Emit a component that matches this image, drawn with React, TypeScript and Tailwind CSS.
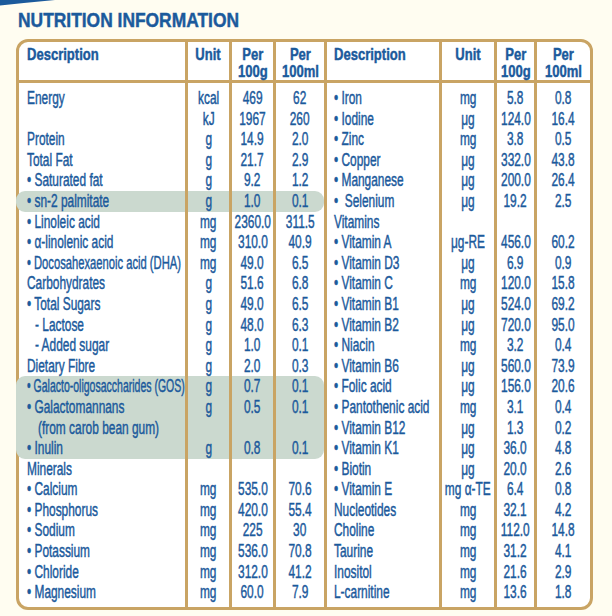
type Line = { d: string; u?: string; a?: string; b?: string; ind?: number; t?: number };

const LEFT_TOP: Line[] = [
  { d: 'Energy', u: 'kcal', a: '469', b: '62' },
  { d: '', u: 'kJ', a: '1967', b: '260' },
  { d: 'Protein', u: 'g', a: '14.9', b: '2.0' },
  { d: 'Total Fat', u: 'g', a: '21.7', b: '2.9' },
  { d: '• Saturated fat', u: 'g', a: '9.2', b: '1.2' },
];
const LEFT_SN2: Line[] = [{ d: '• sn-2 palmitate', u: 'g', a: '1.0', b: '0.1' }];
const LEFT_MID: Line[] = [
  { d: '• Linoleic acid', u: 'mg', a: '2360.0', b: '311.5' },
  { d: '• α-linolenic acid', u: 'mg', a: '310.0', b: '40.9' },
  { d: '• Docosahexaenoic acid (DHA)', u: 'mg', a: '49.0', b: '6.5', t: 1 },
  { d: 'Carbohydrates', u: 'g', a: '51.6', b: '6.8' },
  { d: '• Total Sugars', u: 'g', a: '49.0', b: '6.5' },
  { d: '- Lactose', u: 'g', a: '48.0', b: '6.3', ind: 1 },
  { d: '- Added sugar', u: 'g', a: '1.0', b: '0.1', ind: 1 },
  { d: 'Dietary Fibre', u: 'g', a: '2.0', b: '0.3' },
];
const LEFT_FIBRE: Line[] = [
  { d: '• Galacto-oligosaccharides (GOS)', u: 'g', a: '0.7', b: '0.1', t: 2 },
  { d: '• Galactomannans', u: 'g', a: '0.5', b: '0.1' },
  { d: '(from carob bean gum)', ind: 2 },
  { d: '• Inulin', u: 'g', a: '0.8', b: '0.1' },
];
const LEFT_END: Line[] = [
  { d: 'Minerals' },
  { d: '• Calcium', u: 'mg', a: '535.0', b: '70.6' },
  { d: '• Phosphorus', u: 'mg', a: '420.0', b: '55.4' },
  { d: '• Sodium', u: 'mg', a: '225', b: '30' },
  { d: '• Potassium', u: 'mg', a: '536.0', b: '70.8' },
  { d: '• Chloride', u: 'mg', a: '312.0', b: '41.2' },
  { d: '• Magnesium', u: 'mg', a: '60.0', b: '7.9' },
];

const RIGHT: Line[] = [
  { d: '• Iron', u: 'mg', a: '5.8', b: '0.8' },
  { d: '• Iodine', u: 'μg', a: '124.0', b: '16.4' },
  { d: '• Zinc', u: 'mg', a: '3.8', b: '0.5' },
  { d: '• Copper', u: 'μg', a: '332.0', b: '43.8' },
  { d: '• Manganese', u: 'μg', a: '200.0', b: '26.4' },
  { d: '•\u00a0 Selenium', u: 'μg', a: '19.2', b: '2.5' },
  { d: 'Vitamins' },
  { d: '• Vitamin A', u: 'μg-RE', a: '456.0', b: '60.2' },
  { d: '• Vitamin D3', u: 'μg', a: '6.9', b: '0.9' },
  { d: '• Vitamin C', u: 'mg', a: '120.0', b: '15.8' },
  { d: '• Vitamin B1', u: 'μg', a: '524.0', b: '69.2' },
  { d: '• Vitamin B2', u: 'μg', a: '720.0', b: '95.0' },
  { d: '• Niacin', u: 'mg', a: '3.2', b: '0.4' },
  { d: '• Vitamin B6', u: 'μg', a: '560.0', b: '73.9' },
  { d: '• Folic acid', u: 'μg', a: '156.0', b: '20.6' },
  { d: '• Pantothenic acid', u: 'mg', a: '3.1', b: '0.4' },
  { d: '• Vitamin B12', u: 'μg', a: '1.3', b: '0.2' },
  { d: '• Vitamin K1', u: 'μg', a: '36.0', b: '4.8' },
  { d: '• Biotin', u: 'μg', a: '20.0', b: '2.6' },
  { d: '• Vitamin E', u: 'mg α-TE', a: '6.4', b: '0.8' },
  { d: 'Nucleotides', u: 'mg', a: '32.1', b: '4.2' },
  { d: 'Choline', u: 'mg', a: '112.0', b: '14.8' },
  { d: 'Taurine', u: 'mg', a: '31.2', b: '4.1' },
  { d: 'Inositol', u: 'mg', a: '21.6', b: '2.9' },
  { d: 'L-carnitine', u: 'mg', a: '13.6', b: '1.8' },
];

const LINE = 'border-l-[3px] border-[#c9a464]';

// narrow text: the print uses a condensed face, so squeeze Arial-width glyphs
function Txt({ children, t }: { children?: React.ReactNode; t?: number }) {
  const sc = t === 2 ? 'scale-x-[0.6]' : t === 1 ? 'scale-x-[0.64]' : 'scale-x-[0.68]';
  return <span className={`inline-block origin-left whitespace-nowrap ${sc}`}>{children}</span>;
}

function Num({ children }: { children?: React.ReactNode }) {
  return <span className="inline-block whitespace-nowrap scale-x-[0.68]">{children}</span>;
}

function LeftRow({ d, u, a, b, ind, t }: Line) {
  const pad = ind === 2 ? 'pl-[19px]' : ind === 1 ? 'pl-[16px]' : 'pl-[8px]';
  return (
    <div className="flex h-[20.6px] leading-[20.6px]">
      <div className={`w-[166px] ${pad}`}><Txt t={t}>{d}</Txt></div>
      <div className={`w-[44px] flex justify-center ${LINE}`}><Num>{u}</Num></div>
      <div className={`w-[44px] flex justify-center ${LINE}`}><Num>{a}</Num></div>
      <div className={`w-[51px] flex justify-center ${LINE}`}><Num>{b}</Num></div>
    </div>
  );
}

function RightRow({ d, u, a, b }: Line) {
  return (
    <div className="flex h-[20.6px] leading-[20.6px]">
      <div className={`w-[115px] pl-[7px] ${LINE}`}><Txt>{d}</Txt></div>
      <div className={`w-[55px] flex justify-center ${LINE}`}><Num>{u}</Num></div>
      <div className={`w-[40px] flex justify-center ${LINE}`}><Num>{a}</Num></div>
      <div className={`w-[56px] flex justify-center ${LINE}`}><Num>{b}</Num></div>
    </div>
  );
}

function LeftSpacer({ h }: { h: string }) {
  return (
    <div className={`flex ${h}`}>
      <div className="w-[166px]" />
      <div className={`w-[44px] ${LINE}`} />
      <div className={`w-[44px] ${LINE}`} />
      <div className={`w-[51px] ${LINE}`} />
    </div>
  );
}

function RightSpacer({ h }: { h: string }) {
  return (
    <div className={`flex ${h}`}>
      <div className={`w-[115px] ${LINE}`} />
      <div className={`w-[55px] ${LINE}`} />
      <div className={`w-[40px] ${LINE}`} />
      <div className={`w-[56px] ${LINE}`} />
    </div>
  );
}

function Head({ children, origin }: { children: React.ReactNode; origin?: boolean }) {
  return (
    <span className={`inline-block whitespace-nowrap text-center scale-x-[0.79] ${origin ? 'origin-left' : ''}`}>
      {children}
    </span>
  );
}

export default function App() {
  return (
    <div className="relative w-[612px] h-[616px] bg-[#fffdf1] text-[#1b5a9c] font-['Liberation_Sans',Arial,sans-serif] text-[17.5px] [-webkit-text-stroke:0.45px_#1b5a9c] overflow-hidden">
      <svg className="absolute left-0 top-0" width="70" height="8" viewBox="0 0 70 8">
        <path d="M0 0 H55 Q28 2.5 0 5.5 Z" fill="#1b5a9c" />
      </svg>

      <div className="h-[39px] pl-[18px] pt-[8px] leading-[24px] text-[20px] font-bold">
        <span className="inline-block origin-left scale-x-[0.87] whitespace-nowrap">NUTRITION INFORMATION</span>
      </div>

      <div className="ml-[16px] w-[577px] border-[3px] border-[#c9a464] rounded-[12px] bg-white">
        {/* header */}
        <div className="flex h-[41px] border-b-[3px] border-[#c9a464] font-bold leading-[16.5px] text-[16.5px]">
          <div className="w-[166px] pl-[8px] pt-[4px]"><Head origin>Description</Head></div>
          <div className={`w-[44px] flex justify-center pt-[4px] ${LINE}`}><Head>Unit</Head></div>
          <div className={`w-[44px] flex justify-center pt-[4px] ${LINE}`}><Head>Per<br />100g</Head></div>
          <div className={`w-[51px] flex justify-center pt-[4px] ${LINE}`}><Head>Per<br />100ml</Head></div>
          <div className={`w-[115px] pl-[7px] pt-[4px] ${LINE}`}><Head origin>Description</Head></div>
          <div className={`w-[55px] flex justify-center pt-[4px] ${LINE}`}><Head>Unit</Head></div>
          <div className={`w-[40px] flex justify-center pt-[4px] ${LINE}`}><Head>Per<br />100g</Head></div>
          <div className={`w-[56px] flex justify-center pt-[4px] ${LINE}`}><Head>Per<br />100ml</Head></div>
        </div>

        {/* body */}
        <div className="flex">
          <div className="w-[305px] flex flex-col">
            <LeftSpacer h="h-[5px]" />
            {LEFT_TOP.map((r, i) => <LeftRow key={i} {...r} />)}
            <div className="-ml-[3px] pl-[3px] bg-[#cbd9cf] rounded-[9px]">
              {LEFT_SN2.map((r, i) => <LeftRow key={i} {...r} />)}
            </div>
            {LEFT_MID.map((r, i) => <LeftRow key={i} {...r} />)}
            <div className="-ml-[3px] pl-[3px] bg-[#cbd9cf] rounded-[9px]">
              {LEFT_FIBRE.map((r, i) => <LeftRow key={i} {...r} />)}
            </div>
            {LEFT_END.map((r, i) => <LeftRow key={i} {...r} />)}
            <LeftSpacer h="h-[4px]" />
          </div>
          <div className="flex flex-col">
            <RightSpacer h="h-[5px]" />
            {RIGHT.map((r, i) => <RightRow key={i} {...r} />)}
            <RightSpacer h="h-[4px]" />
          </div>
        </div>
      </div>
    </div>
  );
}
